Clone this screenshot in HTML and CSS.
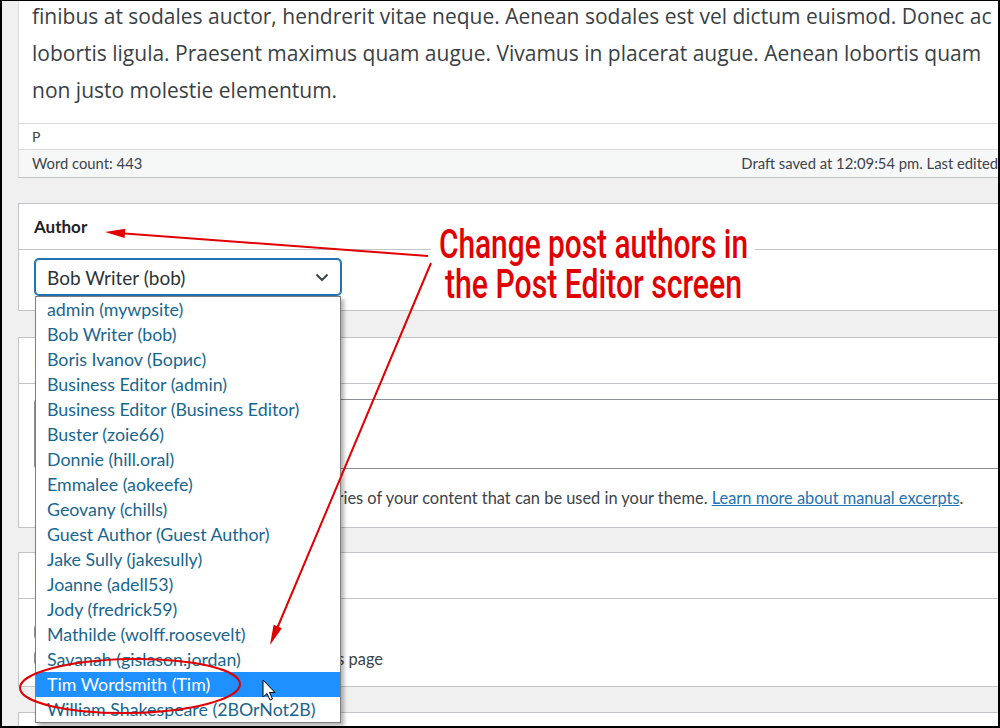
FILE: index.html
```html
<!DOCTYPE html>
<html lang="en">
<head>
<meta charset="utf-8">
<title>Post Editor – Author</title>
<link rel="stylesheet" href="styles.css">
</head>
<body>
<div class="frame">
  <div class="page">
    <section class="box editor">
      <div class="editor-text">
        <div class="editor-lines">finibus at sodales auctor, hendrerit vitae neque. Aenean sodales est vel dictum euismod. Donec ac<br>lobortis ligula. Praesent maximus quam augue. Vivamus in placerat augue. Aenean lobortis quam<br>non justo molestie elementum.</div>
      </div>
      <div class="path">p</div>
      <div class="status">
        <span>Word count: 443</span>
        <span class="saved">Draft saved at 12:09:54 pm. Last edited</span>
      </div>
    </section>

    <section class="box author">
      <div class="pb-head"><h2>Author</h2></div>
      <div class="pb-body author-body">
        <div class="select-wrap">
          <div class="select">
            <span>Bob Writer (bob)</span>
            <svg class="chev" width="14" height="9" viewBox="0 0 14 9"><path d="M1.5 1.5 L7 7 L12.5 1.5" fill="none" stroke="#3c434a" stroke-width="2"/></svg>
          </div>
          <ul class="dropdown">
            <li>admin (mywpsite)</li>
            <li>Bob Writer (bob)</li>
            <li>Boris Ivanov (Борис)</li>
            <li>Business Editor (admin)</li>
            <li>Business Editor (Business Editor)</li>
            <li>Buster (zoie66)</li>
            <li>Donnie (hill.oral)</li>
            <li>Emmalee (aokeefe)</li>
            <li>Geovany (chills)</li>
            <li>Guest Author (Guest Author)</li>
            <li>Jake Sully (jakesully)</li>
            <li>Joanne (adell53)</li>
            <li>Jody (fredrick59)</li>
            <li>Mathilde (wolff.roosevelt)</li>
            <li>Savanah (gislason.jordan)</li>
            <li class="hl">Tim Wordsmith (Tim)</li>
            <li>William Shakespeare (2BOrNot2B)</li>
          </ul>
        </div>
      </div>
    </section>

    <section class="box excerpt">
      <div class="pb-head"><h2>Excerpt</h2></div>
      <div class="pb-body excerpt-body">
        <div class="textarea"></div>
        <p class="help">Excerpts are optional hand-crafted summaries of your content that can be used in your theme. <a href="#">Learn more about manual excerpts</a>.</p>
      </div>
    </section>

    <section class="box discussion">
      <div class="pb-head"><h2>Discussion</h2></div>
      <div class="pb-body discussion-body">
        <label class="check"><span class="cb"></span>Allow comments</label>
        <label class="check"><span class="cb"></span>Allow trackbacks and pingbacks on this page</label>
      </div>
    </section>

    <section class="box last"></section>
  </div>

  <svg class="annot" width="1000" height="728" viewBox="0 0 1000 728">
    <rect x="431" y="224" width="324" height="78" fill="#fff"/>
    <text class="callout" x="439" y="258" textLength="309" lengthAdjust="spacingAndGlyphs">Change post authors in</text>
    <text class="callout" x="445" y="298" textLength="297" lengthAdjust="spacingAndGlyphs">the Post Editor screen</text>
    <line x1="428" y1="256" x2="118" y2="233" stroke="#e10000" stroke-width="2"/>
    <polygon points="105,232 125.3,228.8 124.6,238" fill="#e10000"/>
    <line x1="431" y1="263" x2="276" y2="631" stroke="#e10000" stroke-width="2"/>
    <polygon points="270,645 281.9,628.3 273.6,624.8" fill="#e10000"/>
    <ellipse cx="130" cy="686" rx="110" ry="27" fill="none" stroke="#e10000" stroke-width="2" transform="rotate(-1 130 686)"/>
    <path d="M263 680 L263 697 L267 693.5 L270 700 L272.5 699 L269.5 692.5 L275 692.5 Z" fill="#fff" stroke="#000" stroke-width="1" stroke-linejoin="round"/>
  </svg>
</div>
</body>
</html>
```

FILE: styles.css
```css
html, body {
  margin: 0;
  padding: 0;
  background: #fff;
}

.frame {
  position: relative;
  width: 1000px;
  height: 728px;
  box-sizing: border-box;
  border: 2px solid #000;
  border-top-width: 1px;
  background: #f0f0f1;
  overflow: hidden;
  font-family: Lato, "Open Sans", "Noto Sans", sans-serif;
  color: #3c434a;
}

.page {
  padding-left: 16px;
}

.box {
  background: #fff;
  border: 1px solid #c3c4c7;
  border-right: none;
}

/* editor */
.editor {
  border-top: none;
  border-left-color: #dcdcde;
}

.editor-text {
  height: 122px;
  border-bottom: 1px solid #dcdcde;
  overflow: hidden;
}

.editor-lines {
  margin-top: -3px;
  padding-left: 13px;
  font-family: "Open Sans", "Noto Sans", sans-serif;
  font-size: 21px;
  line-height: 37px;
  white-space: nowrap;
  color: #3a3f45;
}

.path {
  height: 25px;
  line-height: 25px;
  padding-left: 13px;
  font-size: 14px;
  text-transform: uppercase;
  border-bottom: 1px solid #dcdcde;
  color: #3c434a;
}

.status {
  height: 27px;
  line-height: 27px;
  display: flex;
  justify-content: space-between;
  padding-left: 13px;
  background: #f6f7f7;
  font-size: 14.8px;
  white-space: nowrap;
  color: #3c434a;
}

/* postboxes */
.author { margin-top: 25px; }
.excerpt { margin-top: 26px; }
.discussion { margin-top: 24px; }
.last { margin-top: 25px; height: 40px; border-bottom: none; }

.pb-head {
  height: 45px;
  display: flex;
  align-items: center;
  padding-left: 15px;
  border-bottom: 1px solid #c3c4c7;
}

.pb-head h2 {
  margin: 0;
  font-size: 17px;
  font-weight: 700;
  color: #1d2327;
}

.author-body {
  height: 60px;
  box-sizing: border-box;
  padding: 9px 0 0 16px;
}

.select-wrap {
  position: relative;
  width: 306px;
}

.select {
  height: 36px;
  box-sizing: border-box;
  display: flex;
  align-items: center;
  justify-content: space-between;
  padding: 0 11px 0 11px;
  border: 1px solid #2271b1;
  border-radius: 4px;
  box-shadow: 0 0 0 1px #2271b1;
  font-size: 19px;
  color: #2c3338;
  background: #fff;
}

.chev {
  display: block;
}

.dropdown {
  position: absolute;
  left: 0;
  top: 37px;
  width: 306px;
  box-sizing: border-box;
  margin: 0;
  padding: 0;
  list-style: none;
  background: #fff;
  border: 1px solid #7f7f7f;
  box-shadow: 3px 3px 4px rgba(0, 0, 0, 0.3);
  z-index: 5;
}

.dropdown li {
  height: 25px;
  line-height: 25px;
  padding-left: 11px;
  font-size: 17.8px;
  white-space: nowrap;
  color: #17668f;
}

.dropdown li.hl {
  background: #1e90ff;
  color: #fff;
}

.excerpt-body {
  height: 143px;
  box-sizing: border-box;
  padding: 15px 0 0 15px;
}

.textarea {
  height: 70px;
  box-sizing: border-box;
  border: 1px solid #8c8f94;
  border-right: none;
  border-radius: 4px 0 0 4px;
}

.help {
  margin: 19px 0 0 0;
  font-size: 16.4px;
  line-height: 20px;
  white-space: nowrap;
  color: #3c434a;
}

.help a {
  color: #2271b1;
  text-decoration: underline;
}

.discussion-body {
  height: 87px;
  box-sizing: border-box;
  padding: 25px 0 0 15px;
  display: flex;
  flex-direction: column;
  gap: 10px;
}

.check {
  display: flex;
  align-items: center;
  height: 16px;
  font-size: 16.4px;
  white-space: nowrap;
  color: #3c434a;
}

.cb {
  width: 16px;
  height: 16px;
  box-sizing: border-box;
  border: 1px solid #8c8f94;
  border-radius: 4px;
  margin-right: 14px;
  background: #fff;
}

/* annotation overlay */
.annot {
  position: absolute;
  left: -2px;
  top: -1px;
  z-index: 10;
  pointer-events: none;
}

.callout {
  font-family: Roboto, "Liberation Sans", sans-serif;
  font-size: 40px;
  font-weight: 500;
  fill: #e10000;
}
```
